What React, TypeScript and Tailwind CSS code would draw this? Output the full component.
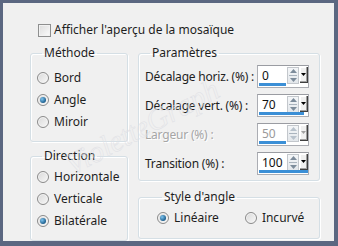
import React from "react";

function Radio({ checked, label }: { checked?: boolean; label: string }) {
  return (
    <div className="flex items-center h-[22px] whitespace-nowrap">
      <span className="relative shrink-0 w-[12px] h-[12px] rounded-full border border-[#8a8a8a] bg-[linear-gradient(135deg,#d9d9d9,#f7f7f7)] shadow-[inset_0_0_0_1px_#f4f4f4] flex items-center justify-center">
        {checked && (
          <span className="w-[6px] h-[6px] rounded-full bg-[radial-gradient(circle_at_35%_35%,#7ec4ef,#1d5f8e_70%)]" />
        )}
      </span>
      <span className="ml-[5px] text-[#1e1e1e]">{label}</span>
    </div>
  );
}

function Group({
  title,
  className,
  children,
}: {
  title: string;
  className?: string;
  children?: React.ReactNode;
}) {
  return (
    <fieldset
      className={
        "border border-[#d5dfe5] rounded-[3px] shadow-[inset_1px_1px_0_#ffffff,1px_1px_0_#ffffff] " +
        (className ?? "")
      }
    >
      <legend className="ml-[5px] px-[2px] leading-[14px] text-[#1e1e1e] whitespace-nowrap">{title}</legend>
      {children}
    </fieldset>
  );
}

function Spin({ value, bar, disabled }: { value: string; bar: number; disabled?: boolean }) {
  return (
    <div className="relative shrink-0 w-[52px] h-[23px] border border-[#abadb3] border-t-[#9a9ca2] bg-white flex items-start">
      <span
        className={
          "ml-[4px] mt-[3px] leading-[14px] " + (disabled ? "text-[#9a9a9a]" : "text-[#111]")
        }
      >
        {value}
      </span>
      <div className="absolute left-[29px] top-[1px] w-[12px] h-[17px] border border-[#c3c7cc] bg-[linear-gradient(#f4f6f8,#e3e7eb)] flex flex-col items-center justify-center gap-[2px]">
        <svg width="7" height="4" viewBox="0 0 7 4">
          <path d="M0 4 L3.5 0 L7 4 Z" fill={disabled ? "#b8c2cc" : "#7d8c9b"} />
        </svg>
        <span className="w-[8px] h-[1px] bg-[#aab4be]" />
        <svg width="7" height="4" viewBox="0 0 7 4">
          <path d="M0 0 L3.5 4 L7 0 Z" fill={disabled ? "#b8c2cc" : "#7d8c9b"} />
        </svg>
      </div>
      <div className="absolute left-[42px] top-[1px] w-[8px] h-[16px] bg-[#f0f0f0] border-r border-b border-r-[#404040] border-b-[#404040] shadow-[inset_-1px_-1px_0_#a0a0a0,inset_1px_1px_0_#ffffff] flex items-center justify-center">
        <svg width="5" height="3" viewBox="0 0 5 3">
          <path d="M0 0 L2.5 3 L5 0 Z" fill={disabled ? "#a0a0a0" : "#000"} />
        </svg>
      </div>
      <span
        className="absolute left-[1px] bottom-[1px] h-[3px] bg-[#3b8fd6]"
        style={{ width: bar }}
      />
    </div>
  );
}

function Row({
  label,
  value,
  bar,
  disabled,
}: {
  label: string;
  value: string;
  bar: number;
  disabled?: boolean;
}) {
  return (
    <div className="flex items-center justify-between h-[23px]">
      <span
        className={
          "whitespace-nowrap tracking-[-0.2px] " +
          (disabled ? "text-[#a6a6a6] [text-shadow:1px_1px_0_#ffffff]" : "text-[#1e1e1e]")
        }
      >
        {label}
      </span>
      <Spin value={value} bar={bar} disabled={disabled} />
    </div>
  );
}

export default function App() {
  return (
    <div className="w-[338px] h-[246px] bg-[#5b6781] pt-[3px] pl-[3px] pr-[4px] pb-[5px] font-['Noto_Sans',sans-serif] text-[12px] leading-[14px]">
      <div className="relative w-full h-full bg-[#f0f0f0] overflow-hidden">
        <div className="flex items-center ml-[35px] pt-[20px]">
          <span className="w-[13px] h-[13px] border border-[#8e8f8f] bg-[linear-gradient(135deg,#dcdcdc,#fbfbfb)] shadow-[inset_0_0_0_1px_#f2f2f2]" />
          <span className="ml-[3px] text-[#1e1e1e]">Afficher l'aperçu de la mosaïque</span>
        </div>
        <div className="flex ml-[27px] mt-[9px] gap-[10px]">
          <div className="w-[98px] flex flex-col gap-[7px]">
            <Group title="Méthode" className="pl-[6px] pt-[7px] pb-[8px]">
              <Radio label="Bord" />
              <Radio label="Angle" checked />
              <Radio label="Miroir" />
            </Group>
            <Group title="Direction" className="pl-[6px] pt-[3px] pb-[8px]">
              <Radio label="Horizontale" />
              <Radio label="Verticale" />
              <Radio label="Bilatérale" checked />
            </Group>
          </div>
          <div className="w-[182px] flex flex-col gap-[9px]">
            <Group title="Paramètres" className="pl-[6px] pr-[10px] pt-[5px] pb-[5px] flex flex-col gap-[6px]">
              <Row label="Décalage horiz. (%) :" value="0" bar={27} />
              <Row label="Décalage vert. (%) :" value="70" bar={45} />
              <Row label="Largeur (%) :" value="50" bar={27} disabled />
              <Row label="Transition (%) :" value="100" bar={49} />
            </Group>
            <Group title="Style d'angle" className="pl-[18px] pt-[3px] pb-[9px]">
              <div className="flex gap-[26px]">
                <Radio label="Linéaire" checked />
                <Radio label="Incurvé" />
              </div>
            </Group>
          </div>
        </div>
        <span className="pointer-events-none absolute left-[139px] top-[124px] -translate-x-1/2 -translate-y-1/2 -rotate-[28deg] whitespace-nowrap italic text-[30px] leading-[30px] text-transparent [-webkit-text-stroke:0.5px_#dfe0e5] font-['Liberation_Serif',serif]">
          VioletteGraph
        </span>
      </div>
    </div>
  );
}
